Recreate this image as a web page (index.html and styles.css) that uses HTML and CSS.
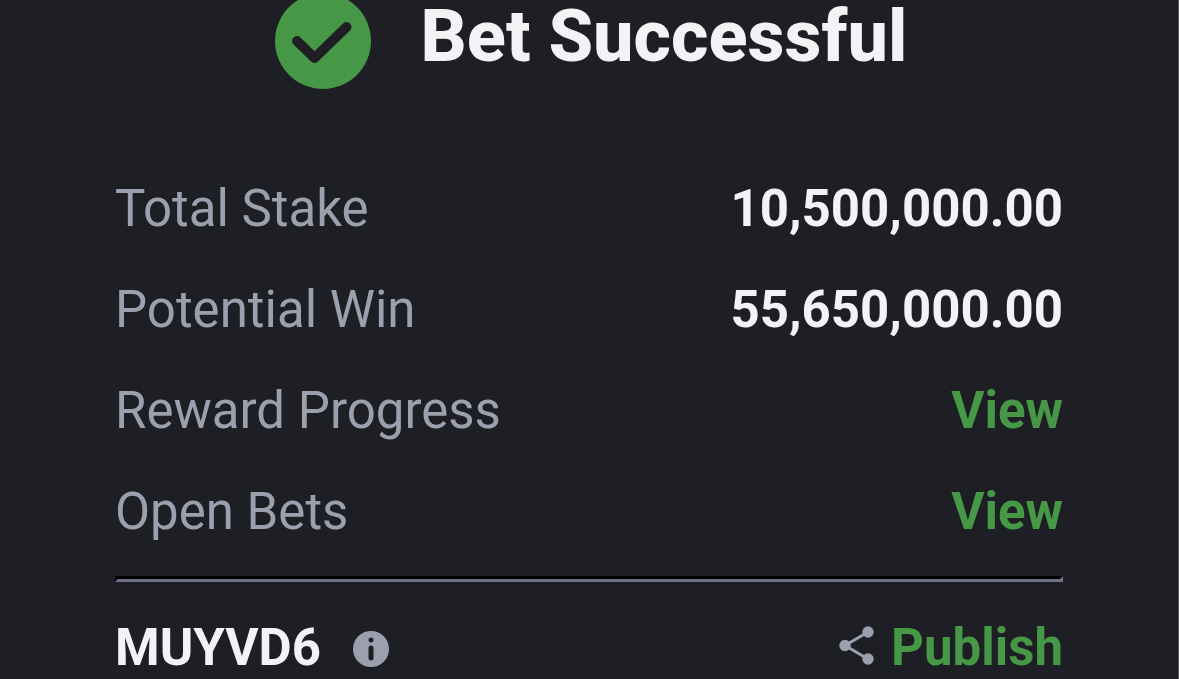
FILE: index.html
```html
<!DOCTYPE html>
<html lang="en">
<head>
<meta charset="utf-8">
<meta name="viewport" content="width=device-width, initial-scale=1">
<title>Bet Successful</title>
<link rel="stylesheet" href="styles.css">
</head>
<body>
<main class="receipt">
  <header class="receipt-header">
    <svg class="success-icon" viewBox="0 0 96 96" aria-hidden="true">
      <circle cx="48" cy="48" r="48" fill="#469746"/>
      <path d="M22 48 39.500 65 71.500 34" fill="none" stroke="#1e1f25" stroke-width="10" stroke-linecap="round" stroke-linejoin="round"/>
    </svg>
    <h1 class="title">Bet Successful</h1>
  </header>
  <dl class="details">
    <div class="row"><dt>Total Stake</dt><dd>10,500,000.00</dd></div>
    <div class="row"><dt>Potential Win</dt><dd>55,650,000.00</dd></div>
    <div class="row"><dt>Reward Progress</dt><dd><a class="link" href="#progress">View</a></dd></div>
    <div class="row"><dt>Open Bets</dt><dd><a class="link" href="#bets">View</a></dd></div>
  </dl>
  <hr class="divider">
  <footer class="receipt-footer">
    <div class="code">
      <span>MUYVD6</span>
      <button class="info" type="button" aria-label="Code information">
        <svg viewBox="0 0 36 38" aria-hidden="true">
          <circle cx="18" cy="20" r="18" fill="#9c9fae"/>
          <circle cx="18" cy="11" r="2.500" fill="#1e1f25"/>
          <path d="M18 19v10" stroke="#1e1f25" stroke-width="5" stroke-linecap="round"/>
        </svg>
      </button>
    </div>
    <button class="publish" type="button">
      <svg class="share-icon" viewBox="0 0 36 44" aria-hidden="true">
        <path d="M29 6 6 19.500 29 33" fill="none" stroke="#9c9fae" stroke-width="3"/>
        <g fill="#9c9fae"><circle cx="29" cy="6" r="5.700"/><circle cx="6" cy="19.500" r="5.700"/><circle cx="29" cy="33" r="5.700"/></g>
      </svg>
      <span>Publish</span>
    </button>
  </footer>
</main>
</body>
</html>
```
FILE: styles.css
```css
* {
  box-sizing: border-box;
}

body {
  margin: 0;
  min-height: 100vh;
  overflow: hidden;
  background: #1e1f25;
  border-right: 1px solid #55575a;
  color: #f2f3f5;
  font-family: Roboto, sans-serif;
  font-size: 51px;
}

.receipt {
  margin-top: -7px;
  padding: 0 115px;
}

.receipt-header {
  display: flex;
  justify-content: center;
  gap: 50px;
  padding-left: 4px;
}

.success-icon {
  width: 96px;
  height: 96px;
  flex: none;
}

.title {
  margin: 8px 0 0;
  font-size: 72px;
  line-height: 72px;
  font-weight: 800;
}

.details {
  margin: 69px 0 0;
}

.row {
  display: flex;
  justify-content: space-between;
  line-height: 101px;
}

.row dt {
  color: #9c9fae;
}

.row dd {
  margin: 0;
  font-weight: 700;
}

.link {
  color: #469746;
  text-decoration: none;
}

.divider {
  margin: 14px 0 0;
  border-style: solid;
  border-width: 3px;
  border-color: #000 #6f7287 #6f7287 #000;
}

.receipt-footer {
  display: flex;
  justify-content: space-between;
  align-items: center;
  margin-top: 36px;
  font-weight: 700;
  line-height: 60px;
}

.code,
.publish {
  display: flex;
  align-items: center;
}

.code {
  gap: 32px;
}

.info,
.publish {
  padding: 0;
  border: 0;
  background: none;
  font: inherit;
}

.info svg {
  display: block;
  width: 36px;
  height: 38px;
}

.publish {
  gap: 16px;
  color: #469746;
}

.share-icon {
  width: 36px;
  height: 44px;
}
```
